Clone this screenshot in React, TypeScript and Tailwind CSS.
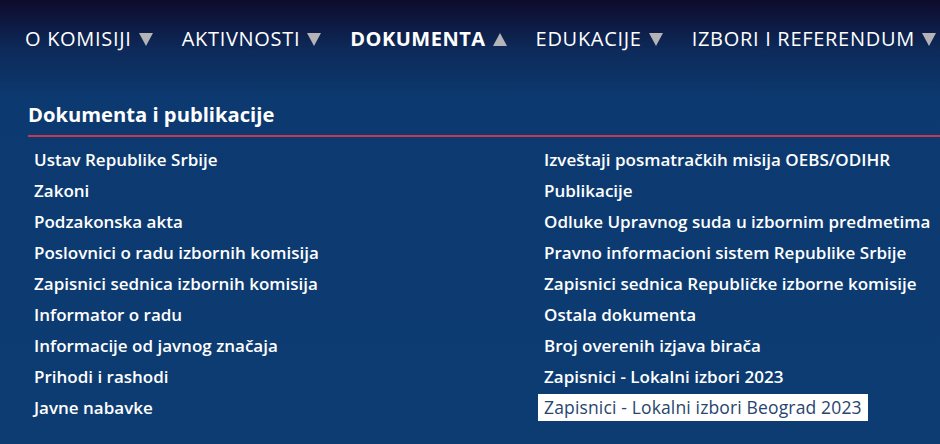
import React from "react";

const nav = [
  { label: "O KOMISIJI", active: false },
  { label: "AKTIVNOSTI", active: false },
  { label: "DOKUMENTA", active: true },
  { label: "EDUKACIJE", active: false },
  { label: "IZBORI I REFERENDUM", active: false },
];

const left = [
  "Ustav Republike Srbije",
  "Zakoni",
  "Podzakonska akta",
  "Poslovnici o radu izbornih komisija",
  "Zapisnici sednica izbornih komisija",
  "Informator o radu",
  "Informacije od javnog značaja",
  "Prihodi i rashodi",
  "Javne nabavke",
];

const right = [
  "Izveštaji posmatračkih misija OEBS/ODIHR",
  "Publikacije",
  "Odluke Upravnog suda u izbornim predmetima",
  "Pravno informacioni sistem Republike Srbije",
  "Zapisnici sednica Republičke izborne komisije",
  "Ostala dokumenta",
  "Broj overenih izjava birača",
  "Zapisnici - Lokalni izbori 2023",
  "Zapisnici - Lokalni izbori Beograd 2023",
];

function Tri({ up }: { up: boolean }) {
  return (
    <svg width="14" height="13" viewBox="0 0 14 13" className="shrink-0">
      {up ? <polygon points="7,0 14,13 0,13" fill="#b3b3b8" /> : <polygon points="0,0 14,0 7,13" fill="#b3b3b8" />}
    </svg>
  );
}

export default function App() {
  return (
    <div
      className="w-[940px] h-[444px] overflow-hidden bg-[linear-gradient(180deg,#0e0b2c_0%,#0d2a5a_50px,#0c3a70_100px,#0d3c72_100%)] text-white"
      style={{ fontFamily: '"Open Sans", "Noto Sans", sans-serif' }}
    >
      <nav className="flex items-center h-[78px] pl-[25px] gap-[29px] text-[20px] tracking-[0.7px]">
        {nav.map((n) => (
          <div key={n.label} className={`flex items-center gap-[7px] ${n.active ? "font-bold tracking-[0.5px]" : ""}`}>
            <span>{n.label}</span>
            <Tri up={n.active} />
          </div>
        ))}
      </nav>
      <div className="pl-[28px] pt-[21px]">
        <h2 className="text-[20.2px] font-bold leading-[30px]">Dokumenta i publikacije</h2>
        <div className="h-[2px] bg-[#c33a50] mt-[6px]" />
        <div className="grid grid-cols-[510px_1fr] pt-[7px] text-[17px] font-semibold">
          <ul className="pl-[6px]">
            {left.map((t) => (
              <li key={t} className="h-[31px] leading-[31px]">{t}</li>
            ))}
          </ul>
          <ul>
            {right.map((t, i) =>
              i === right.length - 1 ? (
                <li key={t} className="h-[31px] flex items-center">
                  <span className="bg-white text-[#27456f] font-normal text-[17.5px] tracking-[0.15px] px-[6px] leading-[27px]">{t}</span>
                </li>
              ) : (
                <li key={t} className="h-[31px] leading-[31px] pl-[6px]">{t}</li>
              )
            )}
          </ul>
        </div>
      </div>
    </div>
  );
}
